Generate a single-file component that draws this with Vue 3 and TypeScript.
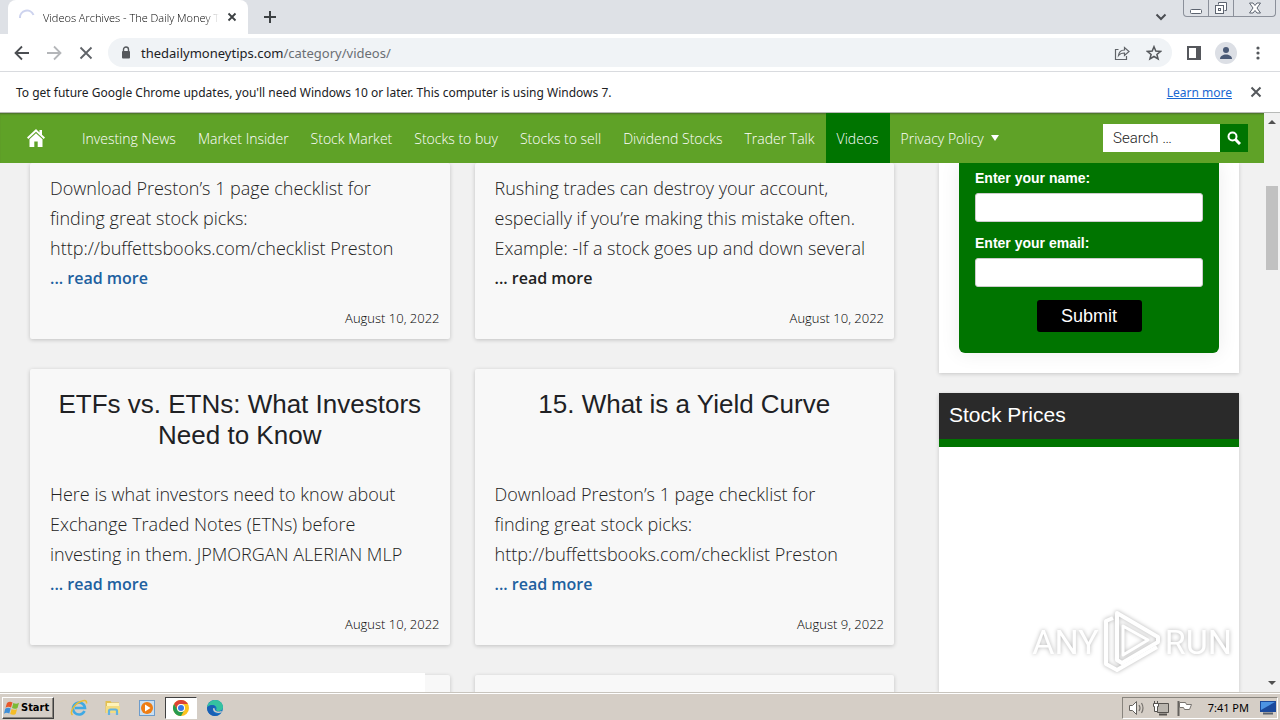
<script setup lang="ts">
interface NavItem {
  label: string
  active?: boolean
  menu?: boolean
}

interface Post {
  title: string[]
  lines: string[]
  date: string
  hovered?: boolean
  clipped?: boolean
}

const navItems: NavItem[] = [
  { label: 'Investing News' },
  { label: 'Market Insider' },
  { label: 'Stock Market' },
  { label: 'Stocks to buy' },
  { label: 'Stocks to sell' },
  { label: 'Dividend Stocks' },
  { label: 'Trader Talk' },
  { label: 'Videos', active: true },
  { label: 'Privacy Policy', menu: true },
]

const checklist = [
  'Download Preston’s 1 page checklist for',
  'finding great stock picks:',
  'http://buffettsbooks.com/checklist Preston',
]

const posts: Post[] = [
  { title: [], lines: checklist, date: 'August 10, 2022', clipped: true },
  {
    title: [],
    lines: [
      'Rushing trades can destroy your account,',
      'especially if you’re making this mistake often.',
      'Example: -If a stock goes up and down several',
    ],
    date: 'August 10, 2022',
    hovered: true,
    clipped: true,
  },
  {
    title: ['ETFs vs. ETNs: What Investors', 'Need to Know'],
    lines: [
      'Here is what investors need to know about',
      'Exchange Traded Notes (ETNs) before',
      'investing in them. JPMORGAN ALERIAN MLP',
    ],
    date: 'August 10, 2022',
  },
  { title: ['15. What is a Yield Curve'], lines: checklist, date: 'August 9, 2022' },
]
</script>

<template>
  <div class="screen">
    <header class="tabstrip">
      <div class="tab">
        <svg class="spinner" viewBox="0 0 16 16"><path d="M1 9a7 7 0 0 1 13.500-3" fill="none" stroke="#cdd3ee" stroke-width="2" /></svg>
        <span class="tab-title">Videos Archives - The Daily Money T</span>
        <button class="plain" aria-label="Close tab">
          <svg width="10" height="10" viewBox="0 0 10 10"><path d="M1.500 1.500l7 7m0-7l-7 7" stroke="#3c4043" stroke-width="1.800" /></svg>
        </button>
      </div>
      <button class="plain new-tab" aria-label="New tab">
        <svg width="12" height="12" viewBox="0 0 12 12"><path d="M6 0v12M0 6h12" stroke="#3c4043" stroke-width="2" /></svg>
      </button>
      <div class="grow"></div>
      <button class="plain tab-search" aria-label="Search tabs">
        <svg width="12" height="8" viewBox="0 0 12 8"><path d="M1.500 1.500L6 6l4.500-4.500" fill="none" stroke="#4a4d52" stroke-width="2" /></svg>
      </button>
      <div class="win-controls">
        <button aria-label="Minimize"><svg width="14" height="14" viewBox="0 0 14 14"><rect x="1.500" y="8.500" width="11" height="4" rx="1" fill="#fff" stroke="#5d6470" /></svg></button>
        <button aria-label="Restore"><svg width="14" height="14" viewBox="0 0 14 14"><path d="M4.500 3.500v-2h8v8h-2" fill="#fff" stroke="#5d6470" /><rect x="1.500" y="4.500" width="8" height="8" fill="#fff" stroke="#5d6470" /><rect x="4.500" y="7.500" width="2" height="2" fill="none" stroke="#5d6470" /></svg></button>
        <button class="wide" aria-label="Close"><svg width="14" height="12" viewBox="0 0 14 12"><path d="M1.500 1h3.500l2 2.500L9 1h3.500L9 6l3.500 5H9L7 8.500 5 11H1.500L5 6z" fill="#fff" stroke="#5d6470" /></svg></button>
      </div>
    </header>

    <div class="toolbar">
      <button class="plain" aria-label="Back"><svg width="16" height="16" viewBox="0 0 16 16"><path d="M15 8H2M8 1.500L1.500 8 8 14.500" fill="none" stroke="#4b4e52" stroke-width="1.800" /></svg></button>
      <button class="plain" aria-label="Forward"><svg width="16" height="16" viewBox="0 0 16 16"><path d="M1 8h13M8 1.500L14.500 8 8 14.500" fill="none" stroke="#b4b6b9" stroke-width="1.800" /></svg></button>
      <button class="plain" aria-label="Stop"><svg width="16" height="16" viewBox="0 0 16 16"><path d="M2.500 2.500l11 11m0-11l-11 11" stroke="#5f6368" stroke-width="1.800" /></svg></button>
      <div class="omnibox">
        <svg width="10" height="13" viewBox="0 0 10 13"><rect x="1" y="5" width="8" height="7.500" rx="1" fill="#55585c" /><path d="M2.500 6V3.500a2.500 2.500 0 0 1 5 0V6" fill="none" stroke="#55585c" stroke-width="1.400" /></svg>
        <div class="url"><span class="host">thedailymoneytips.com</span>/category/videos/</div>
        <button class="plain" aria-label="Share"><svg width="16" height="16" viewBox="0 0 16 16"><path d="M4.500 4.500h-3v10h11V11M4.500 10.500c.5-4 2.500-5.500 6-5.500V2.500L15 6.500l-4.500 4V8C8 8 6 8.500 4.500 10.500z" fill="none" stroke="#606368" stroke-width="1.200" /></svg></button>
        <button class="plain star" aria-label="Bookmark"><svg width="16" height="16" viewBox="0 0 16 16"><path d="M8 1.700l1.800 4.400 4.700.3-3.600 3 1.200 4.600L8 11.500 3.900 14l1.200-4.600-3.600-3 4.700-.3z" fill="none" stroke="#55585c" stroke-width="1.500" /></svg></button>
      </div>
      <button class="plain" aria-label="Side panel"><svg width="14" height="14" viewBox="0 0 14 14"><rect x="1" y="1" width="12" height="12" fill="none" stroke="#55575c" stroke-width="2" /><path d="M9 1h4v12H9z" fill="#55575c" /></svg></button>
      <button class="plain avatar" aria-label="Profile"><svg width="14" height="14" viewBox="0 0 14 14"><circle cx="7" cy="4" r="3" fill="#4a5a76" /><path d="M1 13c0-6 12-6 12 0z" fill="#4a5a76" /></svg></button>
      <button class="plain" aria-label="Menu"><svg width="4" height="14" viewBox="0 0 4 14" fill="#55585c"><circle cx="2" cy="2" r="1.600" /><circle cx="2" cy="7" r="1.600" /><circle cx="2" cy="12" r="1.600" /></svg></button>
    </div>

    <div class="infobar">
      <span>To get future Google Chrome updates, you'll need Windows 10 or later. This computer is using Windows 7.</span>
      <a href="#">Learn more</a>
      <button class="plain" aria-label="Dismiss"><svg width="12" height="12" viewBox="0 0 12 12"><path d="M1.500 1.500l9 9m0-9l-9 9" stroke="#55585c" stroke-width="2" /></svg></button>
    </div>

    <div class="viewport">
      <div class="site">
        <nav class="site-nav">
          <a class="home" href="#" aria-label="Home"><svg width="18" height="18" viewBox="0 0 18 18" fill="#fff"><path d="M9 0L0 8.500 1.300 10 9 2.800l7.700 7.200L18 8.500l-3-2.800V1h-2.500v2.400z" /><path d="M9 4.300L2.500 10.300V18h4.800v-5.500h3.400V18h4.800v-7.700z" /></svg></a>
          <a v-for="item in navItems" :key="item.label" href="#" :class="{ active: item.active }">{{ item.label }}<i v-if="item.menu" class="caret"></i></a>
          <form class="search" @submit.prevent>
            <input type="text" placeholder="Search …" aria-label="Search" />
            <button aria-label="Search"><svg width="14" height="14" viewBox="0 0 14 14"><circle cx="5.500" cy="5.500" r="4" fill="none" stroke="#fff" stroke-width="2" /><path d="M8.500 8.500l4.500 4.500" stroke="#fff" stroke-width="3" /></svg></button>
          </form>
        </nav>
        <div class="content">
          <main class="posts">
            <article v-for="(post, i) in posts" :key="i" class="post" :class="{ clipped: post.clipped }">
              <h2 v-if="post.title.length"><span v-for="t in post.title" :key="t">{{ t }}</span></h2>
              <p><span v-for="line in post.lines" :key="line">{{ line }}</span></p>
              <a href="#" class="more" :class="{ hovered: post.hovered }">... read more</a>
              <time>{{ post.date }}</time>
            </article>
            <article class="post empty"></article>
            <article class="post empty"></article>
          </main>
          <aside>
            <section class="widget signup">
              <form @submit.prevent>
                <label for="name">Enter your name:</label>
                <input id="name" type="text" />
                <label for="email">Enter your email:</label>
                <input id="email" type="email" />
                <button>Submit</button>
              </form>
            </section>
            <section class="widget prices">
              <h3>Stock Prices</h3>
            </section>
          </aside>
        </div>
      </div>
      <div class="scrollbar">
        <svg width="8" height="4" viewBox="0 0 8 4"><path d="M0 4l4-4 4 4z" fill="#505050" /></svg>
        <div class="thumb"></div>
        <svg width="8" height="4" viewBox="0 0 8 4"><path d="M0 0l4 4 4-4z" fill="#505050" /></svg>
      </div>
      <div class="status"></div>
      <div class="watermark">
        <span>ANY</span>
        <svg width="60" height="64" viewBox="0 0 60 64" fill="none" stroke="#fff" stroke-width="4" stroke-linejoin="round"><path d="M15 3l41 24v5L20 53l-5-3z" /><path d="M21 16v29l25-15z" stroke-width="3" /><path d="M11 8L4 11v43l11 6 40-23" /></svg>
        <span>RUN</span>
      </div>
    </div>

    <footer class="taskbar">
      <button class="start">
        <svg width="16" height="16" viewBox="0 0 16 16"><path d="M3 3c2-1.500 3.500-1.500 5.500-.5L7 7.500C5 6.500 3.500 6.500 1.500 7.700z" fill="#e8582a" /><path d="M9.300 3c2 1 3.700 1 5.700-.2L13.500 8c-2 1.200-3.700 1-5.500 0z" fill="#7cba35" /><path d="M1.200 8.700c2-1.200 3.500-1.200 5.500-.2L5.300 13.500c-2-1-3.500-1-5.300.2z" fill="#3f8fd8" /><path d="M7.600 9c2 1 3.500 1 5.500-.1L11.700 14c-2 1.200-3.500 1-5.500 0z" fill="#f5bd27" /></svg>
        Start
      </button>
      <div class="launch">
        <button aria-label="Internet Explorer"><svg width="18" height="18" viewBox="0 0 18 18"><path d="M14.500 12a6 6 0 1 1 .5-3H5" fill="none" stroke="#3fa9e4" stroke-width="2.600" /><path d="M2.500 16C-1 13 5 4 12 2c3-1 5-.5 4.500 2.500" fill="none" stroke="#e9bd35" stroke-width="1.500" /></svg></button>
        <button aria-label="Explorer"><svg width="18" height="18" viewBox="0 0 18 18"><path d="M1.500 2h5l1 1.500H15V14H1.500z" fill="#e3c04f" /><path d="M3 4h12v4H3z" fill="#fff3b8" /><path d="M2 7h14v7H2z" fill="#f4dc80" /><path d="M5 16v-4q0-1.500 1.500-1.500h5Q13 10.500 13 12v4" fill="none" stroke="#62b3df" stroke-width="2.200" /></svg></button>
        <button aria-label="Media Player"><svg width="18" height="18" viewBox="0 0 18 18"><rect x="1.500" y="1.500" width="15" height="15" fill="#c9dff2" stroke="#6d9ccb" /><circle cx="9" cy="9" r="6" fill="#ee7d14" /><path d="M7 5.500v7L12.500 9z" fill="#fff" /></svg></button>
        <button class="running" aria-label="Chrome"><svg width="18" height="18" viewBox="0 0 18 18"><circle cx="9" cy="9" r="8" fill="#fcc31e" /><path d="M2.070 5A8 8 0 0 1 15.930 5H9a4 4 0 0 0-3.460 6z" fill="#dd4235" /><path d="M2.070 5l3.470 6A4 4 0 0 0 12.460 11L9 17A8 8 0 0 1 2.070 5z" fill="#279b50" /><circle cx="9" cy="9" r="4" fill="#fff" /><circle cx="9" cy="9" r="3" fill="#3978e6" /></svg></button>
        <button aria-label="Edge"><svg width="18" height="18" viewBox="0 0 18 18"><circle cx="9" cy="9" r="8" fill="#1672c4" /><path d="M1 8.500C2 3 6 1 9 1c5 0 8 3.500 8 7 0 3-2.500 4-5 4-1.500 0-2.500-.8-1.500-2C11 8 9 6 6.500 6 4 6 2 7.500 1 8.500z" fill="#35c2a0" /><path d="M1 8.500C3 5.500 8 5 9.500 8.500 7 8 6 10 7 12.500c1 2 4 3.500 7 2.200C9 19.500 1 16 1 8.500z" fill="#1a5fb4" /><path d="M8 9.200c-.8 2.800 2.800 5.300 7.700 3.400" stroke="#d5cec6" stroke-width="1.500" fill="none" /></svg></button>
      </div>
      <div class="grow"></div>
      <div class="tray">
        <svg width="18" height="16" viewBox="0 0 18 16"><path d="M1.500 5.500h3l4-4v13l-4-4h-3z" fill="#fff" stroke="#65625e" /><path d="M11 5q2 3 0 6M13.500 3q3 5 0 10" fill="none" stroke="#77736e" stroke-width="1.200" /></svg>
        <svg width="18" height="16" viewBox="0 0 18 16"><path d="M5.500 3.500h11v9h-11z" fill="#b9b5ae" stroke="#55524e" /><path d="M7 14.500h8" stroke="#55524e" stroke-width="2" /><path d="M1.500 3.500h5v3h-1v5h-3v-5h-1zM2.500 3.500V1m3 2.500V1" fill="#fff" stroke="#55524e" /></svg>
        <svg width="18" height="16" viewBox="0 0 18 16"><path d="M2.500 1v15" stroke="#65625e" stroke-width="2" /><path d="M3.500 2.500h6l1 2h5l-2 5h-5l-1-2h-4z" fill="#fff" stroke="#77736e" /></svg>
        <span class="clock">7:41 PM</span>
        <svg width="16" height="14" viewBox="0 0 16 14"><rect width="16" height="11" fill="#1c4a9c" /><path d="M1 1h14L1 9z" fill="#4d94e4" /><path d="M3 12.500h10" stroke="#59616c" stroke-width="2" /></svg>
      </div>
    </footer>
  </div>
</template>

<style>
body {
  margin: 0;
}
</style>

<style scoped>
* {
  box-sizing: border-box;
}
.screen {
  height: 100vh;
  display: flex;
  flex-direction: column;
  overflow: hidden;
  font-family: "Noto Sans", "Open Sans", sans-serif;
  font-size: 12px;
  color: #202124;
}
.plain {
  display: flex;
  padding: 0;
  border: 0;
  background: none;
}
.grow {
  flex: 1;
}
.tabstrip {
  height: 34px;
  display: flex;
  align-items: center;
  padding: 0 4px 0 8px;
  background: #dee1e6;
}
.tab {
  width: 240px;
  height: 34px;
  display: flex;
  align-items: center;
  gap: 8px;
  padding: 0 11px;
  border-radius: 8px 8px 0 0;
  background: #fff;
}
.spinner {
  width: 16px;
  height: 16px;
  flex: none;
}
.tab-title {
  flex: 1;
  white-space: nowrap;
  font-family: "Open Sans", sans-serif;
  font-size: 11px;
  font-weight: 300;
  color: #000;
  mask-image: linear-gradient(to right, #000 92%, transparent);
}
.new-tab {
  margin-left: 16px;
}
.tab-search {
  margin-right: 16px;
}
.win-controls {
  align-self: flex-start;
  display: flex;
  height: 17px;
  border: 1px solid #8b909a;
  border-top: 0;
  border-radius: 0 0 4px 4px;
}
.win-controls button {
  width: 25px;
  padding: 0;
  border: 0;
  border-right: 1px solid #8b909a;
  background: none;
  line-height: 0;
}
.win-controls .wide {
  width: 41px;
  border-right: 0;
}
.toolbar {
  height: 38px;
  display: flex;
  align-items: center;
  gap: 16px;
  padding: 0 20px 0 14px;
  border-bottom: 1px solid #d9dbdf;
  background: #fff;
}
.omnibox {
  flex: 1;
  height: 29px;
  margin: 0 -1px 0 -2px;
  padding: 0 10px 0 13px;
  display: flex;
  align-items: center;
  gap: 10px;
  border-radius: 15px;
  background: #f0f3f6;
}
.url {
  flex: 1;
  font-size: 13px;
  color: #6a6e73;
}
.host {
  color: #202124;
}
.star {
  margin-left: 6px;
}
.avatar {
  width: 22px;
  height: 22px;
  margin: 0 3px 0 -2px;
  align-items: center;
  justify-content: center;
  border-radius: 50%;
  background: #dcdfe5;
}
.infobar {
  height: 41px;
  display: flex;
  align-items: center;
  padding: 0 18px 0 16px;
  border-bottom: 1px solid #b8bab8;
  background: #fff;
}
.infobar span {
  flex: 1;
}
.infobar a {
  margin-right: 18px;
  color: #1967d2;
}
.viewport {
  position: relative;
  flex: 1;
  min-height: 0;
  display: flex;
  overflow: hidden;
  background: #f1f1f1;
}
.site {
  flex: 1;
  min-width: 0;
  display: flex;
  flex-direction: column;
}
.site-nav {
  flex: none;
  height: 50px;
  display: flex;
  align-items: center;
  padding: 0 16px;
  background: #5fa227;
  box-shadow: inset 0 2px 2px -1px #4a6b2c;
}
.site-nav > a {
  height: 50px;
  display: flex;
  align-items: center;
  padding: 0 11px;
  color: #fff;
  font-family: "Open Sans", "Noto Sans", sans-serif;
  font-size: 14px;
  font-weight: 300;
  text-decoration: none;
  white-space: nowrap;
}
.site-nav > .home {
  margin-right: 15px;
}
.site-nav > .active {
  background: #007400;
}
.caret {
  margin-left: 7px;
  border: 4px solid transparent;
  border-top: 6px solid #fff;
  border-bottom: 0;
}
.search {
  display: flex;
  height: 28px;
  margin-left: auto;
}
.search input {
  width: 117px;
  padding: 0 10px;
  border: 0;
  background: #fff;
  font-family: Roboto, sans-serif;
  font-size: 15px;
  font-weight: 300;
}
.search input::placeholder {
  color: #222;
}
.search button {
  width: 28px;
  padding: 0;
  border: 0;
  background: #007400;
  line-height: 0;
}
.content {
  flex: 1;
  min-height: 0;
  display: flex;
  gap: 45px;
  padding: 0 25px 0 30px;
  overflow: hidden;
}
.posts {
  flex: 1;
  display: grid;
  grid-template-columns: 1fr 1fr;
  grid-auto-rows: max-content;
  gap: 30px 25px;
}
.post {
  display: flex;
  flex-direction: column;
  padding: 20px 10px 11px 20px;
  background: #f8f8f8;
  border-radius: 2px;
  box-shadow: 0 1px 4px rgba(0, 0, 0, 0.2);
}
.post.clipped {
  padding-top: 10px;
}
.post.empty {
  height: 276px;
}
.post span {
  display: block;
  white-space: nowrap;
}
.post h2 {
  min-height: 62px;
  margin: 0 10px 28px 0;
  font: 400 26px/31px "Liberation Sans", Arial, sans-serif;
  text-align: center;
}
.post p {
  margin: 0;
  font: 300 18px/30px "Open Sans", "Noto Sans", sans-serif;
  color: #222;
}
.more {
  align-self: flex-start;
  color: #20609f;
  font: 600 16px/30px "Open Sans", "Noto Sans", sans-serif;
  text-decoration: none;
}
.more.hovered {
  color: #222;
}
.post time {
  margin-top: 15px;
  text-align: right;
  font: 350 13px/20px "Open Sans", sans-serif;
  color: #000;
}
aside {
  width: 300px;
  display: flex;
  flex-direction: column;
  gap: 20px;
}
.widget {
  background: #fff;
  box-shadow: 0 1px 4px rgba(0, 0, 0, 0.18);
}
.signup {
  padding: 0 20px 20px;
}
.signup form {
  display: flex;
  flex-direction: column;
  padding: 5px 16px 21px;
  border-radius: 0 0 6px 6px;
  background: #007400;
  box-shadow: 0 0 20px rgba(0, 0, 0, 0.08);
}
.signup label {
  color: #fff;
  font: 700 14px/20px "Liberation Sans", Arial, sans-serif;
}
.signup input {
  height: 29px;
  margin: 5px 0 11px;
  border: 1px solid #ccc;
  border-radius: 3px;
  background: #fff;
}
.signup button {
  align-self: center;
  width: 105px;
  height: 32px;
  margin-top: 2px;
  border: 0;
  border-radius: 3px;
  background: #000;
  color: #fff;
  font: 400 18px "Liberation Sans", Arial, sans-serif;
}
.prices {
  flex: 1;
}
.prices h3 {
  height: 54px;
  margin: 0;
  padding: 0 10px;
  border-bottom: 8px solid #007400;
  background: #2a2a2a;
  color: #fff;
  font: 400 21px/44px "Liberation Sans", Arial, sans-serif;
}
.scrollbar {
  width: 16px;
  display: flex;
  flex-direction: column;
  align-items: center;
  padding: 7px 0;
  background: #f1f1f1;
}
.thumb {
  width: 12px;
  height: 84px;
  margin: 62px 0 auto;
  background: #c1c1c1;
}
.status {
  position: absolute;
  left: 0;
  bottom: 0;
  width: 425px;
  height: 19px;
  background: #fff;
}
.watermark {
  position: absolute;
  right: 48px;
  bottom: 18px;
  display: flex;
  align-items: center;
  gap: 3px;
  color: #fff;
  font: 400 34px Roboto, "Liberation Sans", sans-serif;
  filter: drop-shadow(0 0 2px rgba(0, 0, 0, 0.3));
}
.taskbar {
  height: 28px;
  display: flex;
  align-items: center;
  padding: 3px 2px 1px;
  border-top: 1px solid #c8c4bd;
  background: #d5cec6;
  box-shadow: inset 0 1px #fff;
}
.start {
  width: 52px;
  height: 22px;
  display: flex;
  align-items: center;
  gap: 1px;
  padding: 0 1px;
  border: 1px solid;
  border-color: #fff #404040 #404040 #fff;
  background: #d5cec6;
  box-shadow: inset -1px -1px #88847d;
  font: 700 11px "DejaVu Sans Condensed", "Noto Sans", sans-serif;
  color: #000;
}
.launch {
  display: flex;
  gap: 2px;
  margin-left: 9px;
}
.launch button {
  width: 32px;
  height: 22px;
  padding: 0;
  border: 1px solid transparent;
  background: none;
  line-height: 0;
}
.launch .running {
  border-color: #404040 #fff #fff #404040;
  background: #fff;
}
.tray {
  height: 22px;
  display: flex;
  align-items: center;
  gap: 6px;
  padding: 0 1px 0 5px;
  border: 1px solid;
  border-color: #88847d #fff #fff #88847d;
  font-size: 11px;
  color: #000;
}
.clock {
  margin: 0 5px 0 8px;
}
</style>
